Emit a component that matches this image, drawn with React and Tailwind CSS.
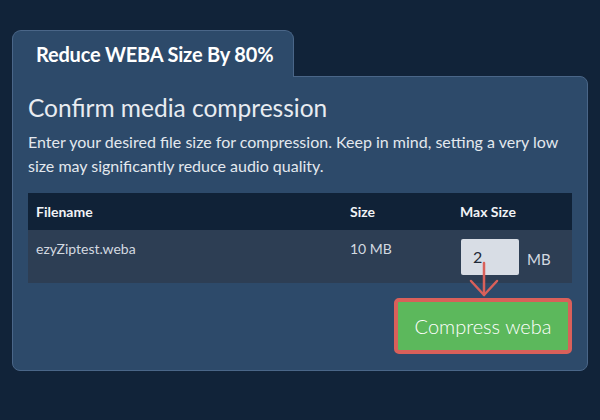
export default function App() {
  return (
    <div
      className="w-[600px] h-[420px] bg-[#112339] pt-[30px] px-[12px]"
      style={{ fontFamily: 'Lato, "Open Sans", sans-serif' }}
    >
      {/* Tab */}
      <div className="relative z-10 -mb-px w-[282px] h-[47px] bg-[#2d4a6a] border border-b-0 border-[#4a6688] rounded-t-[9px] flex items-center pl-[23px]">
        <span className="text-[20px] font-bold text-white tracking-[-0.2px]">Reduce WEBA Size By 80%</span>
      </div>

      {/* Panel */}
      <div className="relative w-[576px] h-[295px] bg-[#2d4a6a] border border-[#4a6688] rounded-[8px] rounded-tl-none px-[15px] pt-[14px]">
        <h1 className="text-[24.5px] leading-[34px] text-[#e8ecf1]">Confirm media compression</h1>
        <p className="mt-[5px] text-[16px] leading-[24px] text-[#e3e8ee]">
          Enter your desired file size for compression. Keep in mind, setting a very low size may significantly reduce audio quality.
        </p>

        <div className="mt-[15px] w-[544px] text-[14px]">
          <div className="flex h-[37px] items-center bg-[#102237] font-bold text-[#f1f3f6]">
            <div className="w-[314px] pl-[8px]">Filename</div>
            <div className="w-[110px] pl-[8px]">Size</div>
            <div className="flex-1 pl-[8px]">Max Size</div>
          </div>
          <div className="flex h-[53px] bg-[#2d3e54] text-[#d3d9e0]">
            <div className="w-[314px] pl-[8px] pt-[8px]">ezyZiptest.weba</div>
            <div className="w-[110px] pl-[8px] pt-[8px]">10 MB</div>
            <div className="flex-1 pl-[9px] pt-[9px] flex items-start">
              <div className="w-[58px] h-[36px] bg-[#d8dde5] rounded-[2px] text-[#1f2a38] text-[16px] pl-[12px] pt-[8px] leading-[20px]">2</div>
              <span className="ml-[8px] mt-[9px] text-[#d3d9e0] text-[15px]">MB</span>
            </div>
          </div>
        </div>

        <div className="flex justify-end w-[544px] mt-[15px]">
          <div className="w-[178px] h-[56px] rounded-[5px] border-[4px] border-[#d9605a] bg-[#5cb85c] flex items-center justify-center">
            <span className="text-[20px] font-light text-white">Compress weba</span>
          </div>
        </div>

        {/* Arrow pointer */}
        <svg className="absolute left-[456px] top-[184px]" width="30" height="40" viewBox="0 0 30 40" fill="none">
          <path d="M15 2 V34" stroke="#d9605a" strokeWidth="2.5" strokeLinecap="round" />
          <path d="M2 20 L15 34 L28 20" stroke="#d9605a" strokeWidth="2.5" strokeLinecap="round" strokeLinejoin="round" />
        </svg>
      </div>
    </div>
  );
}
